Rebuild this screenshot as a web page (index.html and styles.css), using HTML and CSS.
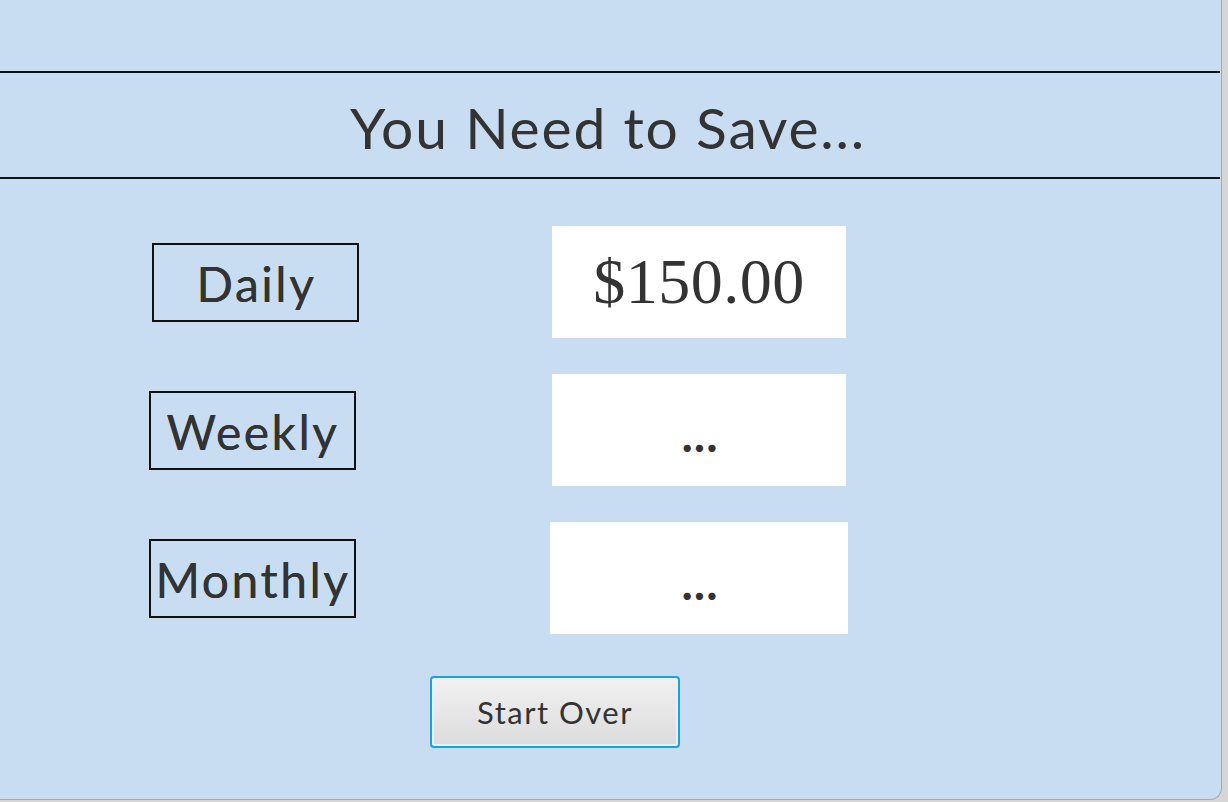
FILE: index.html
```html
<!DOCTYPE html>
<html>
<head>
<meta charset="utf-8">
<link rel="stylesheet" href="styles.css">
</head>
<body>
<div class="window">
  <div class="title-bar"><h1 class="title">You Need to Save...</h1></div>
  <div class="rows">
    <div class="row">
      <div class="label-cell"><div class="label label-first">Daily</div></div>
      <div class="value">$150.00</div>
    </div>
    <div class="row">
      <div class="label-cell"><div class="label">Weekly</div></div>
      <div class="value"><span class="dots">...</span></div>
    </div>
    <div class="row">
      <div class="label-cell"><div class="label">Monthly</div></div>
      <div class="value value-wide"><span class="dots">...</span></div>
    </div>
  </div>
  <div class="actions"><button class="btn">Start Over</button></div>
</div>
</body>
</html>
```
FILE: styles.css
```css
html, body {
  margin: 0;
  padding: 0;
}
body {
  background: #d6d6d6;
  width: 1228px;
  height: 802px;
  overflow: hidden;
}
.window {
  width: 1222px;
  height: 800px;
  background: #c8ddf2;
  border-right: 1px solid #a9a9a9;
  border-bottom: 1px solid #a9a9a9;
  border-bottom-right-radius: 12px;
  padding-top: 71px;
  box-sizing: border-box;
  font-family: Lato, "Open Sans", sans-serif;
  color: #333333;
}
.title-bar {
  border-top: 2px solid #111;
  border-bottom: 2px solid #111;
  height: 108px;
  box-sizing: border-box;
  margin-right: 1px;
  display: flex;
  align-items: center;
  justify-content: center;
}
.title {
  margin: 0;
  font-weight: 400;
  font-size: 57px;
  letter-spacing: 1.8px;
  padding-right: 4px;
  padding-top: 4px;
}
.rows {
  display: flex;
  flex-direction: column;
  gap: 36px;
  margin-top: 47px;
}
.row {
  display: flex;
  align-items: center;
  height: 112px;
}
.label-cell {
  width: 504px;
  display: flex;
  justify-content: center;
}
.label {
  width: 207px;
  height: 79px;
  box-sizing: border-box;
  border: 2px solid #111;
  display: flex;
  align-items: center;
  justify-content: center;
  font-size: 48px;
  letter-spacing: 2.5px;
  white-space: nowrap;
  padding-top: 2px;
  padding-left: 2px;
  text-shadow: 0 0 0.6px #333;
}
.label-first {
  margin-left: 7px;
}
.value {
  margin-left: 48px;
  width: 294px;
  height: 112px;
  background: #ffffff;
  display: flex;
  align-items: center;
  justify-content: center;
  font-family: "Liberation Serif", serif;
  font-size: 64px;
  letter-spacing: 0.5px;
}
.value-wide {
  margin-left: 46px;
  width: 298px;
}
.dots {
  font-family: Lato, sans-serif;
  font-weight: 700;
  font-size: 48px;
  letter-spacing: 1px;
  padding-top: 6px;
  padding-left: 2px;
}
.actions {
  margin-top: 42px;
  display: flex;
  padding-left: 430px;
}
.btn {
  width: 250px;
  height: 72px;
  border: 2px solid #19a3dc;
  border-radius: 4px;
  box-shadow: inset 0 0 0 2px #e6f2f8;
  background: linear-gradient(#f1f1f1, #dcdcdc);
  font-family: Lato, sans-serif;
  font-size: 31px;
  color: #333;
  letter-spacing: 1.5px;
  padding: 0;
}
```
